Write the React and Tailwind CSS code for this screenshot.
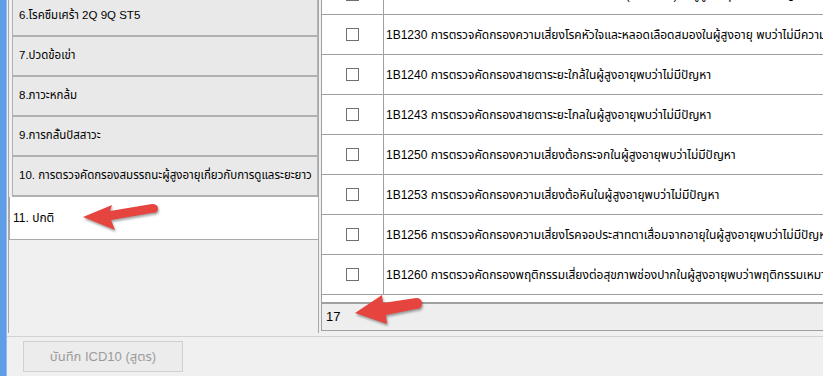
import React from 'react';

const font = "font-['Liberation_Sans','Noto_Sans_Thai','Noto_Sans',sans-serif]";

const leftItems = [
  '6.โรคซึมเศร้า 2Q 9Q ST5',
  '7.ปวดข้อเข่า',
  '8.ภาวะหกล้ม',
  '9.การกลั้นปัสสาวะ',
  '10. การตรวจคัดกรองสมรรถนะผู้สูงอายุเกี่ยวกับการดูแลระยะยาว',
];

const rows = [
  '1B1220 การตรวจคัดกรองความเสี่ยงโรคเบาหวาน (ค่าน้ำตาล) ในผู้สูงอายุพบว่าไม่มีปัญหา',
  '1B1230 การตรวจคัดกรองความเสี่ยงโรคหัวใจและหลอดเลือดสมองในผู้สูงอายุ พบว่าไม่มีความเสี่ยง',
  '1B1240 การตรวจคัดกรองสายตาระยะใกล้ในผู้สูงอายุพบว่าไม่มีปัญหา',
  '1B1243 การตรวจคัดกรองสายตาระยะไกลในผู้สูงอายุพบว่าไม่มีปัญหา',
  '1B1250 การตรวจคัดกรองความเสี่ยงต้อกระจกในผู้สูงอายุพบว่าไม่มีปัญหา',
  '1B1253 การตรวจคัดกรองความเสี่ยงต้อหินในผู้สูงอายุพบว่าไม่มีปัญหา',
  '1B1256 การตรวจคัดกรองความเสี่ยงโรคจอประสาทตาเสื่อมจากอายุในผู้สูงอายุพบว่าไม่มีปัญหา',
  '1B1260 การตรวจคัดกรองพฤติกรรมเสี่ยงต่อสุขภาพช่องปากในผู้สูงอายุพบว่าพฤติกรรมเหมาะสม',
];

const Arrow = ({ className, d }) => (
  <svg className={`absolute drop-shadow-[1px_2px_1px_rgba(0,0,0,0.35)] ${className}`} viewBox="0 0 85 42">
    <path d={d} fill="#e5443f" />
  </svg>
);

export default function App() {
  return (
    <div className={`relative flex w-[823px] h-[376px] overflow-hidden bg-[#f0f0f0] text-black ${font}`}>
      {/* window edge */}
      <div className="w-[7px] h-full bg-[#5f9ee6] border-r border-[#8dbcf0]" />

      <div className="flex-1 flex flex-col min-w-0">
        <div className="flex h-[336px]">
          {/* left menu list */}
          <div className="ml-[1px] w-[311px] h-[333px] border-x border-[#a9a9a9] pl-[3px] flex flex-col">
            <div className="-mt-[3px] flex flex-col">
              {leftItems.map((t) => (
                <div
                  key={t}
                  className="h-[40px] flex items-center pl-[6px] bg-[#e9e9e9] border-x border-b-2 border-[#b0b0b0] text-[11.5px] whitespace-nowrap overflow-hidden"
                >
                  {t}
                </div>
              ))}
              <div className="-ml-[3px] -mr-[1px] h-[43px] flex items-center pl-[3px] bg-white border border-t-0 border-[#a9a9a9] text-[12px]">
                11. ปกติ
              </div>
            </div>
          </div>

          {/* grid */}
          <div className="flex-1 min-w-0 pl-[2px] h-[331px] flex flex-col">
            <div className="flex-1 flex flex-col border-l border-b border-[#a0a0a0] min-h-0">
              <div className="h-[302px] bg-white overflow-hidden">
                <div className="-mt-[25px]">
                  {rows.map((t) => (
                    <div key={t} className="h-[40px] flex border-b border-[#a0a0a0]">
                      <div className="w-[62px] shrink-0 border-r border-[#a0a0a0] flex items-center justify-center">
                        <div className="w-[13px] h-[13px] border border-[#707070] bg-white" />
                      </div>
                      <div className="pl-[2px] flex items-center whitespace-nowrap text-[12px]">{t}</div>
                    </div>
                  ))}
                </div>
              </div>
              <div className="h-[27px] border-t-2 border-[#a0a0a0] bg-[#eeeeee] flex items-center pl-[4px] text-[13px]">
                17
              </div>
            </div>
          </div>
        </div>

        {/* footer */}
        <div className="flex-1 border-t border-[#d2d2d2]">
          <button
            disabled
            className={`ml-[16px] mt-[4px] w-[160px] h-[31px] bg-[#ececec] border border-[#d0d0d0] text-[#9b9b9b] text-[13px] ${font}`}
          >
            บันทึก ICD10 (สูตร)
          </button>
        </div>
      </div>

      <Arrow
        className="left-[78px] top-[196px] w-[85px] h-[42px]"
        d="M5,21 L34,9 L32,15 L74,8 Q80,8 80,12.5 Q80,17 74,17 L33,24 L37,34 Z"
      />
      <Arrow
        className="left-[350px] top-[290px] w-[85px] h-[42px]"
        d="M5,23 L32,5 L33,13 L66,8 Q72,8 72,13.5 Q72,19 66,19 L36,25 L37,34 Z"
      />
    </div>
  );
}
